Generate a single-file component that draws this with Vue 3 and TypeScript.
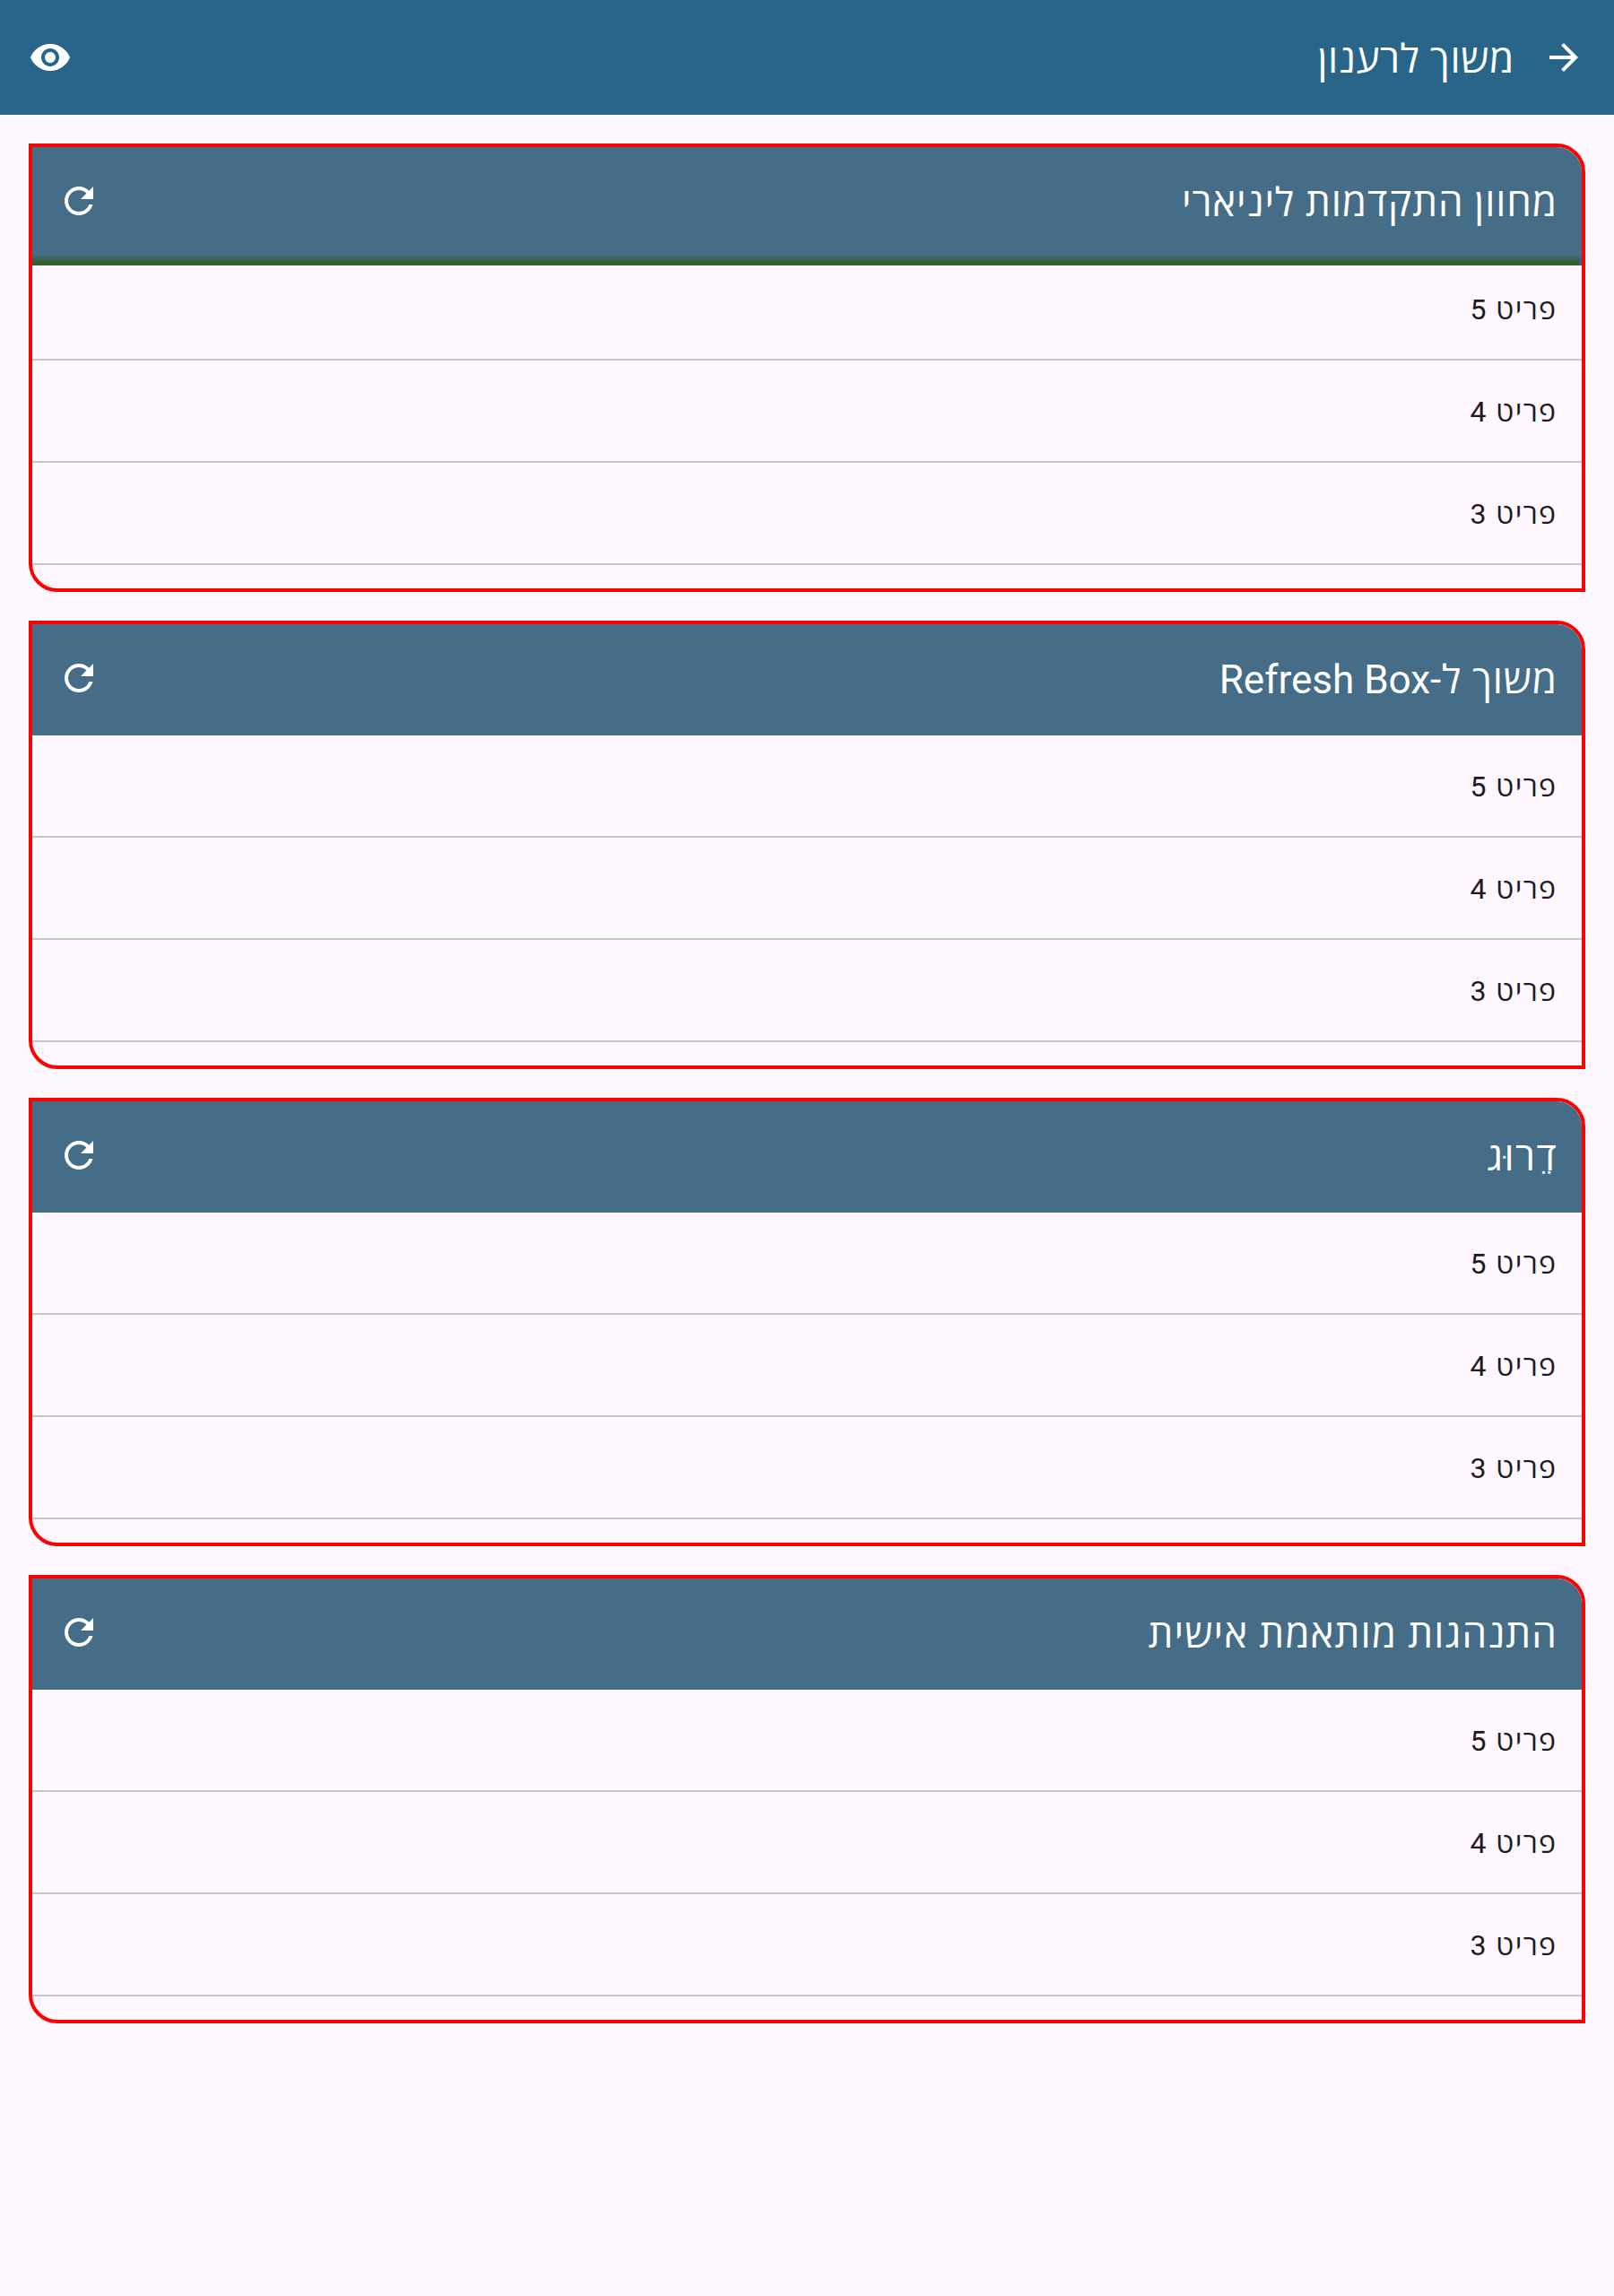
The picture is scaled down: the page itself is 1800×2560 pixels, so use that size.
<script setup lang="ts">
interface Panel {
  title: string
  latin?: string
  tone?: string
  loading: boolean
}

const panels: Panel[] = [
  { title: 'מחוון התקדמות ליניארי', loading: true },
  { title: 'משוך ל-', latin: 'Refresh Box', loading: false },
  { title: 'דֵרוּג', tone: 'loose', loading: false },
  { title: 'התנהגות מותאמת אישית', tone: 'relaxed', loading: false },
]
const items: number[] = [5, 4, 3]
</script>

<template>
  <div class="screen" dir="rtl">
    <header class="app-bar">
      <svg class="icon" viewBox="0 0 24 24"><path d="M12 4l-1.41 1.41L16.17 11H4v2h12.17l-5.58 5.59L12 20l8-8z" /></svg>
      <h1 class="title">משוך לרענון</h1>
      <svg class="icon" viewBox="0 0 24 24"><path d="M12 4.5C7 4.5 2.73 7.61 1 12c1.73 4.39 6 7.5 11 7.5s9.27-3.11 11-7.5c-1.73-4.39-6-7.5-11-7.5zM12 17c-2.76 0-5-2.24-5-5s2.24-5 5-5 5 2.24 5 5-2.24 5-5 5zm0-8c-1.66 0-3 1.34-3 3s1.34 3 3 3 3-1.34 3-3-1.34-3-3-3z" /></svg>
    </header>
    <main class="panels">
      <section v-for="panel in panels" :key="panel.title" class="panel">
        <div class="panel-bar">
          <h2 class="title" :class="panel.tone">{{ panel.title }}<span v-if="panel.latin" class="latin">{{ panel.latin }}</span></h2>
          <svg class="icon" viewBox="0 0 24 24"><path d="M17.65 6.35C16.2 4.9 14.21 4 12 4c-4.42 0-7.99 3.58-7.99 8s3.57 8 7.99 8c3.73 0 6.84-2.55 7.73-6h-2.08c-.82 2.33-3.04 4-5.65 4-3.31 0-6-2.69-6-6s2.69-6 6-6c1.66 0 3.14.69 4.22 1.78L13 11h7V4l-2.35 2.35z" /></svg>
        </div>
        <div class="list">
          <div v-if="panel.loading" class="progress"></div>
          <div v-for="item in items" :key="item" class="row">פריט {{ item }}</div>
        </div>
      </section>
    </main>
  </div>
</template>

<style>
body {
  margin: 0;
  background: #fef7ff;
}
</style>

<style scoped>
.screen {
  min-height: 2560px;
  background: #fef7ff;
  font-family: Roboto, "Open Sans", sans-serif;
  color: #1d1b20;
}
.app-bar {
  display: flex;
  align-items: center;
  height: 128px;
  box-sizing: border-box;
  padding: 0 32px;
  background: #296588;
  color: #fff;
}
.icon {
  width: 48px;
  height: 48px;
  flex: none;
  fill: #fff;
}
.title {
  flex: 1;
  margin: 0;
  padding-top: 4px;
  font-size: 44px;
  line-height: 56px;
  font-weight: 400;
  letter-spacing: 0.9px;
  white-space: nowrap;
}
.title.relaxed {
  letter-spacing: 1.1px;
}
.title.loose {
  letter-spacing: 1.4px;
}
.latin {
  letter-spacing: 0;
}
.app-bar .title {
  margin-right: 31px;
  letter-spacing: 0.65px;
}
.panels {
  display: flex;
  flex-direction: column;
  gap: 32px;
  padding: 32px;
}
.panel {
  height: 500px;
  box-sizing: border-box;
  border: 4px solid #f00;
  border-radius: 0 32px 0 32px;
  overflow: hidden;
  background: #fef7ff;
}
.panel-bar {
  display: flex;
  align-items: center;
  height: 124px;
  box-sizing: border-box;
  padding: 0 27px 4px 28px;
  background: #456d87;
  color: #fff;
}
.list {
  position: relative;
}
.progress {
  position: absolute;
  top: -4px;
  left: 0;
  right: 0;
  height: 12px;
  background:
    linear-gradient(#456d87, #33628a 7px) right / 3px 100% no-repeat,
    linear-gradient(#456d87, #33602f 8px);
}
.row {
  display: flex;
  align-items: center;
  height: 114px;
  box-sizing: border-box;
  padding: 2px 27.5px 0;
  border-bottom: 2px solid #c8c3cc;
  font-size: 32px;
  line-height: 48px;
  letter-spacing: 1.4px;
  white-space: pre;
}
</style>
